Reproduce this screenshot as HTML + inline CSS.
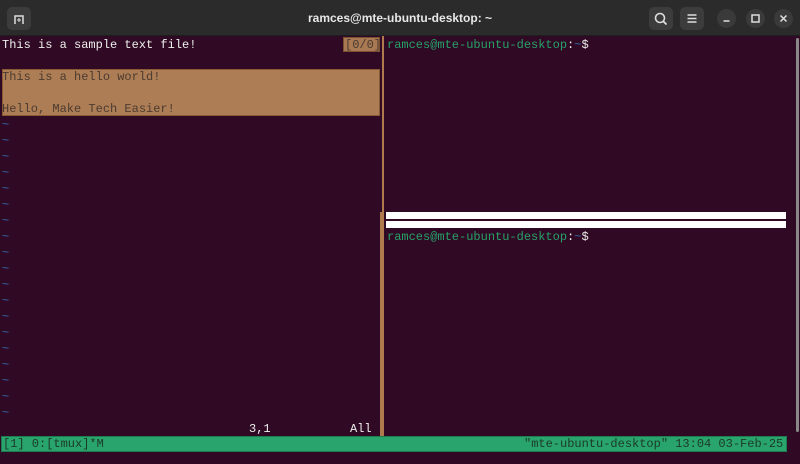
<!DOCTYPE html>
<html><head><style>
*{margin:0;padding:0;box-sizing:border-box}
body{width:800px;height:464px;background:#300a24;position:relative;overflow:hidden;font-family:"Liberation Mono",monospace;font-size:12px;line-height:16px}
.hdr{position:absolute;left:0;top:0;width:800px;height:36px;background:#2b2b2b;border-bottom:1px solid #1e1e1e}
.title{position:absolute;top:10px;left:0;width:800px;text-align:center;font-family:"Liberation Sans",sans-serif;font-weight:bold;font-size:12px;color:#e8e8e8;line-height:16px}
.btn{position:absolute;top:7px;width:24px;height:23px;background:#3c3c3c;border-radius:5px}
.circ{position:absolute;top:9px;width:19px;height:19px;background:#3a3a3a;border-radius:50%}
.t{position:absolute;white-space:pre;color:#eeeeec}
.til{color:#3465a4}
.g{color:#26a269}
</style></head><body>
<div class="hdr"></div>
<div class="btn" style="left:7px;top:7px;width:24px"><svg width="24" height="23"><path d="M8 17V9h8v8" fill="none" stroke="#ddd" stroke-width="1.5"/><path d="M12 11v4M10 13h4" stroke="#ddd" stroke-width="1"/></svg></div>
<div class="title">ramces@mte-ubuntu-desktop: ~</div>
<div class="btn" style="left:649px"><svg width="24" height="23"><circle cx="11" cy="11" r="4.5" fill="none" stroke="#ddd" stroke-width="1.6"/><path d="M14.5 14.5l3 3" stroke="#ddd" stroke-width="1.8"/></svg></div>
<div class="btn" style="left:680px"><svg width="24" height="23"><path d="M7.5 8h9M7.5 11.5h9M7.5 15h9" stroke="#ddd" stroke-width="1.5"/></svg></div>
<div class="circ" style="left:717px"><svg width="19" height="19"><path d="M6.5 12h6" stroke="#ddd" stroke-width="1.5"/></svg></div>
<div class="circ" style="left:746px"><svg width="19" height="19"><rect x="6" y="6" width="7" height="7" fill="none" stroke="#ddd" stroke-width="1.5"/></svg></div>
<div class="circ" style="left:774px"><svg width="19" height="19"><path d="M6.5 6.5l6 6M12.5 6.5l-6 6" stroke="#ddd" stroke-width="1.5"/></svg></div>

<div class="t" style="left:2px;top:37px">This is a sample text file!</div>
<div style="position:absolute;left:343px;top:37px;width:37px;height:15px;background:#a97953;border:1px solid #7a5030"></div>
<div class="t" style="left:345px;top:37px;color:#4a3a30">[0/0]</div>
<div style="position:absolute;left:2px;top:69px;width:378px;height:47px;background:#ad7d55;border:1px solid #8a5a35"></div>
<div class="t" style="left:2px;top:69px;color:#4c3b30">This is a hello world!</div>
<div class="t" style="left:2px;top:101px;color:#4c3b30">Hello, Make Tech Easier!</div>
<div class="t til" style="left:2px;top:117px">~
~
~
~
~
~
~
~
~
~
~
~
~
~
~
~
~
~
~</div>
<div class="t" style="left:249px;top:421px">3,1</div>
<div class="t" style="left:350px;top:421px">All</div>

<div style="position:absolute;left:382px;top:36px;width:2px;height:400px;background:#b07a4f"></div>
<div style="position:absolute;left:380px;top:212px;width:2px;height:224px;background:#b07a4f"></div>
<div style="position:absolute;left:386px;top:212px;width:400px;height:7px;background:#fff"></div>
<div style="position:absolute;left:386px;top:221px;width:400px;height:7px;background:#fff"></div>

<div class="t" style="left:387px;top:37px"><span class="g">ramces@mte-ubuntu-desktop</span>:<span style="color:#3465a4">~</span>$</div>
<div class="t" style="left:387px;top:229px"><span class="g">ramces@mte-ubuntu-desktop</span>:<span style="color:#3465a4">~</span>$</div>

<div style="position:absolute;left:796px;top:38px;width:3px;height:394px;background:#888;border-radius:2px"></div>

<div style="position:absolute;left:1px;top:436px;width:786px;height:16px;background:#28a46c;border:1px solid #1f7a50"></div>
<div class="t" style="left:3px;top:436px;color:#1c3a2a">[1] 0:[tmux]*M</div>
<div class="t" style="left:524px;top:436px;color:#1c3a2a">"mte-ubuntu-desktop" 13:04 03-Feb-25</div>
</body></html>
